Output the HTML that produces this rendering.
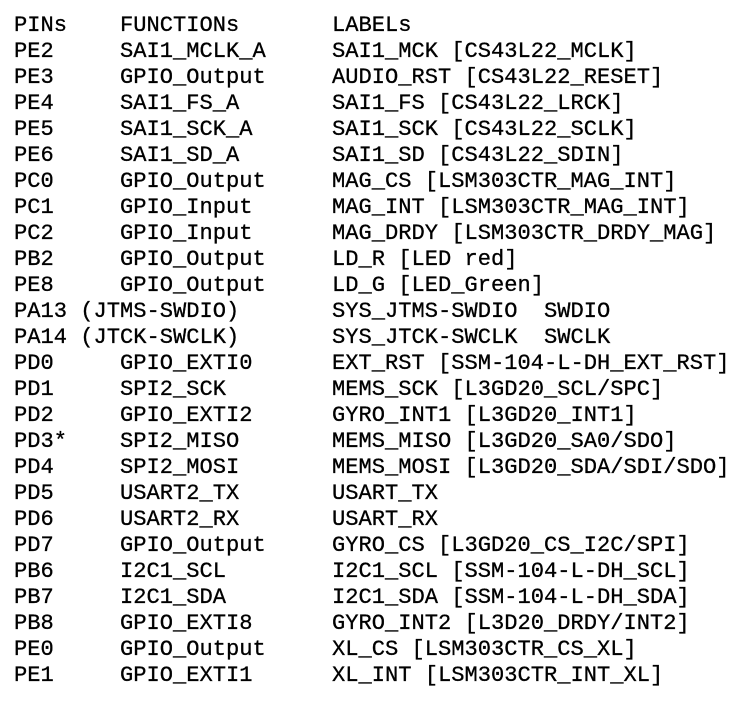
<!DOCTYPE html>
<html><head><meta charset="utf-8"><style>
html,body{margin:0;padding:0;background:#fff;width:754px;height:702px;overflow:hidden}
pre{margin:0;padding:13px 0 0 14px;font-family:"Liberation Mono","DejaVu Sans Mono",monospace;font-size:22.08px;line-height:26px;color:#000;-webkit-text-stroke:0.3px #000}
</style></head><body><pre>PINs    FUNCTIONs       LABELs
PE2     SAI1_MCLK_A     SAI1_MCK [CS43L22_MCLK]
PE3     GPIO_Output     AUDIO_RST [CS43L22_RESET]
PE4     SAI1_FS_A       SAI1_FS [CS43L22_LRCK]
PE5     SAI1_SCK_A      SAI1_SCK [CS43L22_SCLK]
PE6     SAI1_SD_A       SAI1_SD [CS43L22_SDIN]
PC0     GPIO_Output     MAG_CS [LSM303CTR_MAG_INT]
PC1     GPIO_Input      MAG_INT [LSM303CTR_MAG_INT]
PC2     GPIO_Input      MAG_DRDY [LSM303CTR_DRDY_MAG]
PB2     GPIO_Output     LD_R [LED red]
PE8     GPIO_Output     LD_G [LED_Green]
PA13 (JTMS-SWDIO)       SYS_JTMS-SWDIO  SWDIO
PA14 (JTCK-SWCLK)       SYS_JTCK-SWCLK  SWCLK
PD0     GPIO_EXTI0      EXT_RST [SSM-104-L-DH_EXT_RST]
PD1     SPI2_SCK        MEMS_SCK [L3GD20_SCL/SPC]
PD2     GPIO_EXTI2      GYRO_INT1 [L3GD20_INT1]
PD3*    SPI2_MISO       MEMS_MISO [L3GD20_SA0/SDO]
PD4     SPI2_MOSI       MEMS_MOSI [L3GD20_SDA/SDI/SDO]
PD5     USART2_TX       USART_TX
PD6     USART2_RX       USART_RX
PD7     GPIO_Output     GYRO_CS [L3GD20_CS_I2C/SPI]
PB6     I2C1_SCL        I2C1_SCL [SSM-104-L-DH_SCL]
PB7     I2C1_SDA        I2C1_SDA [SSM-104-L-DH_SDA]
PB8     GPIO_EXTI8      GYRO_INT2 [L3D20_DRDY/INT2]
PE0     GPIO_Output     XL_CS [LSM303CTR_CS_XL]
PE1     GPIO_EXTI1      XL_INT [LSM303CTR_INT_XL]</pre></body></html>
